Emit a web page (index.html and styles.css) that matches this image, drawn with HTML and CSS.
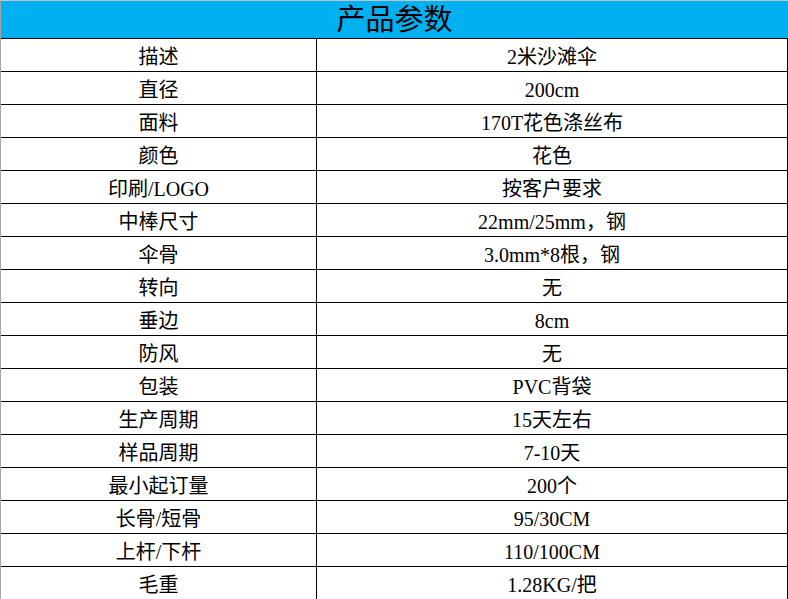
FILE: index.html
```html
<!DOCTYPE html>
<html lang="zh-CN">
<head>
<meta charset="utf-8">
<title>产品参数</title>
<link rel="stylesheet" href="styles.css">
</head>
<body>
<div class="sheet">
  <div class="title">产品参数</div>
  <div class="row"><div class="cell key">描述</div><div class="cell val">2米沙滩伞</div></div>
  <div class="row"><div class="cell key">直径</div><div class="cell val">200cm</div></div>
  <div class="row"><div class="cell key">面料</div><div class="cell val">170T花色涤丝布</div></div>
  <div class="row"><div class="cell key">颜色</div><div class="cell val">花色</div></div>
  <div class="row"><div class="cell key">印刷/LOGO</div><div class="cell val">按客户要求</div></div>
  <div class="row"><div class="cell key">中棒尺寸</div><div class="cell val">22mm/25mm，钢</div></div>
  <div class="row"><div class="cell key">伞骨</div><div class="cell val">3.0mm*8根，钢</div></div>
  <div class="row"><div class="cell key">转向</div><div class="cell val">无</div></div>
  <div class="row"><div class="cell key">垂边</div><div class="cell val">8cm</div></div>
  <div class="row"><div class="cell key">防风</div><div class="cell val">无</div></div>
  <div class="row"><div class="cell key">包装</div><div class="cell val">PVC背袋</div></div>
  <div class="row"><div class="cell key">生产周期</div><div class="cell val">15天左右</div></div>
  <div class="row"><div class="cell key">样品周期</div><div class="cell val">7-10天</div></div>
  <div class="row"><div class="cell key">最小起订量</div><div class="cell val">200个</div></div>
  <div class="row"><div class="cell key">长骨/短骨</div><div class="cell val">95/30CM</div></div>
  <div class="row"><div class="cell key">上杆/下杆</div><div class="cell val">110/100CM</div></div>
  <div class="row"><div class="cell key">毛重</div><div class="cell val">1.28KG/把</div></div>
</div>
</body>
</html>
```
FILE: styles.css
```css
html, body {
  margin: 0;
  padding: 0;
  background: #fff;
}
body {
  width: 788px;
  height: 599px;
  overflow: hidden;
  font-family: "Liberation Serif", "Noto Sans CJK SC", serif;
  color: #000;
}
.sheet {
  width: 787px;
  height: 598px;
  border-top: 1px solid #c4c4c4;
  border-left: 1px solid #a5a5a5;
  overflow: hidden;
}
.title {
  height: 37px;
  background: #00b0f0;
  display: flex;
  align-items: center;
  justify-content: center;
  font-size: 29px;
  line-height: 1;
  padding-top: 2px;
  box-sizing: border-box;
}
.row {
  display: grid;
  grid-template-columns: 316px 470px;
  height: 33px;
  box-sizing: border-box;
  border-top: 1px solid #000;
  border-right: 1px solid #000;
  width: 787px;
}
.cell {
  display: flex;
  align-items: center;
  justify-content: center;
  font-size: 20px;
  line-height: 1;
  padding-top: 3px;
  box-sizing: border-box;
  white-space: nowrap;
}
.key {
  border-right: 1px solid #000;
}
```
